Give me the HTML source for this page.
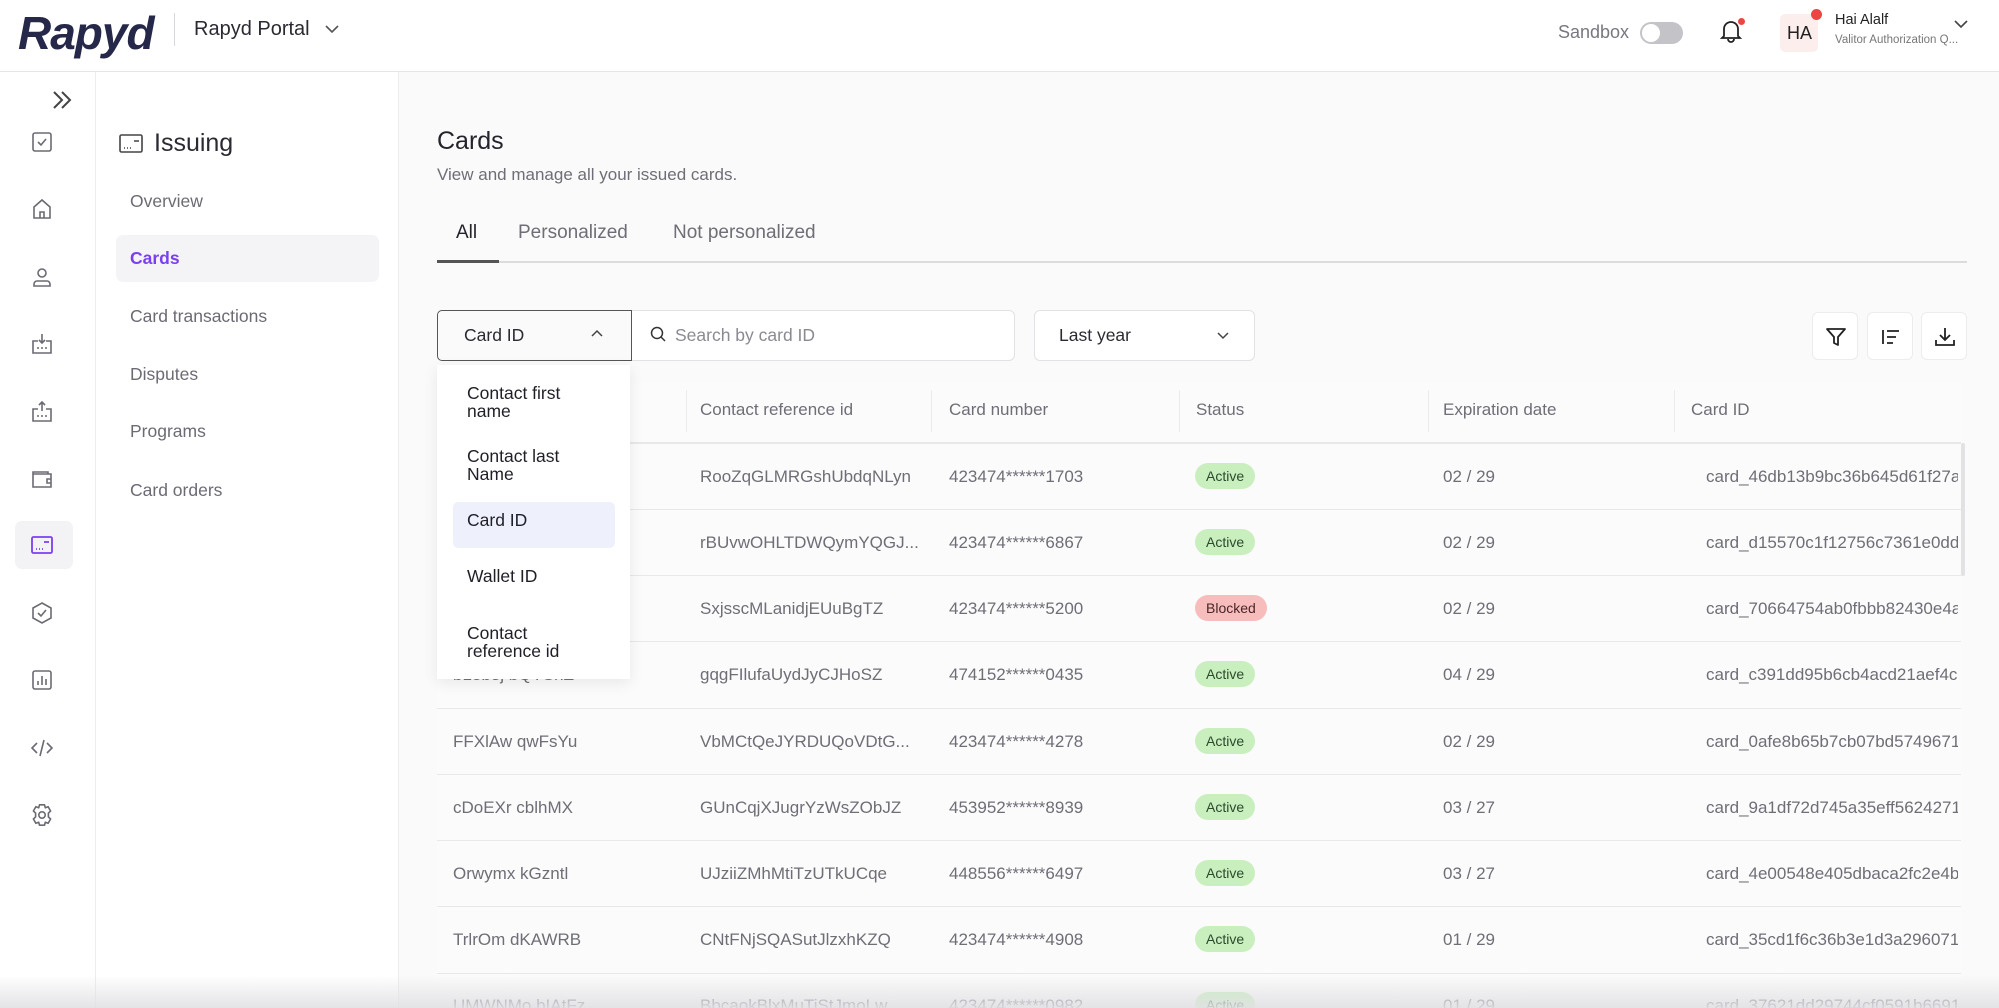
<!DOCTYPE html>
<html><head><meta charset="utf-8"><style>
*{box-sizing:border-box;margin:0;padding:0}
body{width:1999px;height:1008px;overflow:hidden;background:#fafafa;font-family:"Liberation Sans",sans-serif;position:relative;color:#2b2b36}
.abs{position:absolute}
.hdr{left:0;top:0;width:1999px;height:72px;background:#fff;border-bottom:1px solid #e6e6ea}
.rail{left:0;top:72px;width:96px;height:936px;background:#fff;border-right:1px solid #ececef}
.side{left:96px;top:72px;width:303px;height:936px;background:#fff;border-right:1px solid #ececef}
.ic{position:absolute;left:30px;width:24px;height:24px}
.nav{position:absolute;left:34px;font-size:17.5px;color:#6b6b75}
.t{position:absolute;white-space:nowrap}
.row{position:absolute;left:437px;width:1524px;height:1px;background:#e8e8ea}
.cell{position:absolute;font-size:17px;color:#6e6e77;white-space:nowrap}
.pill{position:absolute;height:26px;border-radius:13px;font-size:14px;line-height:26px;padding:0 11px;color:#2c4a2c;background:#c9efbf}
.btn{position:absolute;top:312px;width:46px;height:48px;background:#fff;border:1px solid #ececef;border-radius:6px}
.dd{position:absolute;left:467px;font-size:17.5px;color:#1f1f28;line-height:18px}
</style></head><body>
<div class="abs hdr"></div>
<div class="t" style="left:18px;top:6px;font-size:46px;font-weight:bold;font-style:italic;color:#262849;letter-spacing:-1px">Rapyd</div>
<div class="abs" style="left:174px;top:13px;width:1px;height:33px;background:#d8d8dc"></div>
<div class="t" style="left:194px;top:18px;font-size:20px;color:#2a2a33">Rapyd Portal</div>
<svg class="abs" style="left:324px;top:23px" width="16" height="12" viewBox="0 0 16 12"><path d="M2 3l6 6 6-6" fill="none" stroke="#555" stroke-width="1.6"/></svg>
<div class="t" style="left:1558px;top:22px;font-size:18px;color:#777780">Sandbox</div>
<div class="abs" style="left:1640px;top:22px;width:43px;height:22px;border-radius:11px;background:#c4c4c8"></div>
<div class="abs" style="left:1642px;top:24px;width:18px;height:18px;border-radius:50%;background:#fff"></div>
<svg class="abs" style="left:1719px;top:18px" width="24" height="26" viewBox="0 0 24 26"><path d="M5 18V11a7 7 0 0114 0v7l2 2H3z M9 21a3 3 0 006 0" fill="none" stroke="#222" stroke-width="1.8"/></svg>
<div class="abs" style="left:1738px;top:18px;width:7px;height:7px;border-radius:50%;background:#f04444"></div>
<div class="abs" style="left:1780px;top:14px;width:38px;height:38px;border-radius:5px;background:#fdeeee"></div>
<div class="t" style="left:1787px;top:23px;font-size:18px;color:#222">HA</div>
<div class="abs" style="left:1811px;top:9px;width:11px;height:11px;border-radius:50%;background:#f04444"></div>
<div class="t" style="left:1835px;top:12px;font-size:14.5px;color:#222">Hai Alalf</div>
<div class="t" style="left:1835px;top:34px;font-size:11.5px;color:#777">Valitor Authorization Q...</div>
<svg class="abs" style="left:1953px;top:18px" width="16" height="12" viewBox="0 0 16 12"><path d="M2 3l6 6 6-6" fill="none" stroke="#444" stroke-width="1.6"/></svg>

<div class="abs rail">
<svg class="ic" style="left:50px;top:16px" width="18" height="18" viewBox="0 0 18 18"><path d="M3 3l6 6-6 6M9 3l6 6-6 6" fill="none" stroke="#444" stroke-width="1.5"/></svg>
<svg class="ic" style="top:58px" viewBox="0 0 24 24"><rect x="3" y="3" width="18" height="18" rx="2" fill="none" stroke="#6a6a72" stroke-width="1.6"/><path d="M8 12l3 3 5-6" fill="none" stroke="#6a6a72" stroke-width="1.6"/></svg>
<svg class="ic" style="top:125px" viewBox="0 0 24 24"><path d="M4 21V10l8-7 8 7v11zM10 21v-6h4v6" fill="none" stroke="#6a6a72" stroke-width="1.6"/></svg>
<svg class="ic" style="top:193px" viewBox="0 0 24 24"><circle cx="12" cy="8" r="4" fill="none" stroke="#6a6a72" stroke-width="1.6"/><path d="M4 21v-2a3 3 0 013-3h10a3 3 0 013 3v2z" fill="none" stroke="#6a6a72" stroke-width="1.6"/></svg>
<svg class="ic" style="top:260px" viewBox="0 0 24 24"><path d="M8 9H3v12h18V9h-5M12 2v9M9 8l3 3 3-3M7 16h2M11 16h2M15 16h2" fill="none" stroke="#6a6a72" stroke-width="1.6"/></svg>
<svg class="ic" style="top:328px" viewBox="0 0 24 24"><path d="M8 9H3v12h18V9h-5M12 11V2M9 5l3-3 3 3M7 16h2M11 16h2M15 16h2" fill="none" stroke="#6a6a72" stroke-width="1.6"/></svg>
<svg class="ic" style="top:395px" viewBox="0 0 24 24"><path d="M3 7V5h15v2M3 7h18v13H3zM21 12h-4v4h4" fill="none" stroke="#6a6a72" stroke-width="1.6"/></svg>
<div class="abs" style="left:15px;top:449px;width:58px;height:48px;border-radius:7px;background:#f3f3f5"></div>
<svg class="ic" style="top:461px" viewBox="0 0 24 24"><rect x="2" y="4" width="20" height="16" rx="1.5" fill="none" stroke="#7b3ff2" stroke-width="1.8"/><path d="M14 9h5M6 16h1M9 16h1M12 16h1" stroke="#7b3ff2" stroke-width="1.8"/></svg>
<svg class="ic" style="top:529px" viewBox="0 0 24 24"><path d="M12 2l9 5v10l-9 5-9-5V7z M8 12l3 3 5-6" fill="none" stroke="#6a6a72" stroke-width="1.6"/></svg>
<svg class="ic" style="top:596px" viewBox="0 0 24 24"><rect x="3" y="3" width="18" height="18" rx="2" fill="none" stroke="#6a6a72" stroke-width="1.6"/><path d="M8 17v-4M12 17V8M16 17v-6" stroke="#6a6a72" stroke-width="1.6"/></svg>
<svg class="ic" style="top:664px" viewBox="0 0 24 24"><path d="M7 7l-5 5 5 5M17 7l5 5-5 5M14 4l-4 16" fill="none" stroke="#6a6a72" stroke-width="1.6"/></svg>
<svg class="ic" style="top:731px" viewBox="0 0 24 24"><circle cx="12" cy="12" r="3.2" fill="none" stroke="#6a6a72" stroke-width="1.6"/><path d="M9.5 1.8h5l.8 3 2.8-1.1 2.5 4.3-2.2 2.1v3.8l2.2 2.1-2.5 4.3-2.8-1.1-.8 3h-5l-.8-3-2.8 1.1-2.5-4.3 2.2-2.1v-3.8L3.4 8l2.5-4.3 2.8 1.1z" fill="none" stroke="#6a6a72" stroke-width="1.6" stroke-linejoin="round"/></svg>
</div>

<div class="abs side">
<svg class="abs" style="left:23px;top:61px" width="24" height="22" viewBox="0 0 24 22"><rect x="1" y="2" width="22" height="17" rx="1.5" fill="none" stroke="#444" stroke-width="1.6"/><path d="M15 8h5M5 15h1M8 15h1M11 15h1" stroke="#444" stroke-width="1.6"/></svg>
<div class="t" style="left:58px;top:57px;font-size:25px;color:#2a2a33">Issuing</div>
<div class="nav" style="top:119px">Overview</div>
<div class="abs" style="left:20px;top:163px;width:263px;height:47px;border-radius:7px;background:#f4f4f6"></div>
<div class="nav" style="top:176px;color:#7b3ff2;font-weight:bold">Cards</div>
<div class="nav" style="top:234px">Card transactions</div>
<div class="nav" style="top:292px">Disputes</div>
<div class="nav" style="top:349px">Programs</div>
<div class="nav" style="top:408px">Card orders</div>
</div>

<div class="t" style="left:437px;top:127px;font-size:25px;color:#24242c">Cards</div>
<div class="t" style="left:437px;top:165px;font-size:17px;color:#6e6e77">View and manage all your issued cards.</div>
<div class="t" style="left:456px;top:222px;font-size:19px;color:#24242c">All</div>
<div class="t" style="left:518px;top:222px;font-size:19px;color:#6e6e77">Personalized</div>
<div class="t" style="left:673px;top:222px;font-size:19px;color:#6e6e77">Not personalized</div>
<div class="abs" style="left:437px;top:261px;width:1530px;height:2px;background:#dcdcdf"></div>
<div class="abs" style="left:437px;top:260px;width:62px;height:3px;background:#555"></div>

<div class="abs" style="left:631px;top:310px;width:384px;height:51px;background:#fff;border:1px solid #e2e2e6;border-radius:0 6px 6px 0"></div>
<div class="abs" style="left:437px;top:310px;width:195px;height:51px;background:#fafafa;border:1.5px solid #555;border-radius:5px 0 0 5px"></div>
<div class="t" style="left:464px;top:325px;font-size:17.5px;color:#2a2a33">Card ID</div>
<svg class="abs" style="left:590px;top:329px" width="14" height="10" viewBox="0 0 14 10"><path d="M2 7l5-5 5 5" fill="none" stroke="#444" stroke-width="1.5"/></svg>
<svg class="abs" style="left:650px;top:326px" width="17" height="17" viewBox="0 0 17 17"><circle cx="7" cy="7" r="5.5" fill="none" stroke="#333" stroke-width="1.5"/><path d="M11 11l4 4" stroke="#333" stroke-width="1.5"/></svg>
<div class="t" style="left:675px;top:325px;font-size:17.5px;color:#8a8a92">Search by card ID</div>
<div class="abs" style="left:1034px;top:310px;width:221px;height:51px;background:#fff;border:1px solid #e2e2e6;border-radius:6px"></div>
<div class="t" style="left:1059px;top:325px;font-size:17.5px;color:#2a2a33">Last year</div>
<svg class="abs" style="left:1216px;top:330px" width="14" height="10" viewBox="0 0 14 10"><path d="M2 3l5 5 5-5" fill="none" stroke="#444" stroke-width="1.5"/></svg>
<div class="btn" style="left:1812px"><svg style="position:absolute;left:11px;top:12px" width="24" height="24" viewBox="0 0 24 24"><path d="M3 4h18l-7 8v8l-4-2v-6z" fill="none" stroke="#222" stroke-width="1.8" stroke-linejoin="round"/></svg></div>
<div class="btn" style="left:1867px"><svg style="position:absolute;left:12px;top:13px" width="22" height="22" viewBox="0 0 22 22"><path d="M3 4v14M7 5h12M7 11h9M7 17h6" stroke="#222" stroke-width="1.8"/></svg></div>
<div class="btn" style="left:1921px"><svg style="position:absolute;left:11px;top:12px" width="24" height="24" viewBox="0 0 24 24"><path d="M12 3v12M7 10l5 5 5-5M3 15v5h18v-5" fill="none" stroke="#222" stroke-width="1.8"/></svg></div>

<div class="abs" style="left:437px;top:383px;width:1524px;height:600px;background:#fbfbfb"></div>
<div class="abs" style="left:686px;top:390px;width:1px;height:42px;background:#ececee"></div>
<div class="abs" style="left:931px;top:390px;width:1px;height:42px;background:#ececee"></div>
<div class="abs" style="left:1179px;top:390px;width:1px;height:42px;background:#ececee"></div>
<div class="abs" style="left:1428px;top:390px;width:1px;height:42px;background:#ececee"></div>
<div class="abs" style="left:1674px;top:390px;width:1px;height:42px;background:#ececee"></div>
<div class="cell" style="left:700px;top:400px">Contact reference id</div>
<div class="cell" style="left:949px;top:400px">Card number</div>
<div class="cell" style="left:1196px;top:400px">Status</div>
<div class="cell" style="left:1443px;top:400px">Expiration date</div>
<div class="cell" style="left:1691px;top:400px">Card ID</div>
<div class="row" style="top:442px;height:2px"></div>
<div class="row" style="top:509px"></div><div class="row" style="top:575px"></div><div class="row" style="top:641px"></div><div class="row" style="top:708px"></div><div class="row" style="top:774px"></div><div class="row" style="top:840px"></div><div class="row" style="top:906px"></div><div class="row" style="top:973px"></div>
<div class="abs" style="left:1961px;top:443px;width:4px;height:133px;border-radius:2px;background:#e2e2e4"></div>

<div style="position:absolute;left:0;top:0;width:1958px;height:1008px;overflow:hidden">
<div class="cell" style="left:453px;top:467px">fkQhbc PLxPsA</div>
<div class="cell" style="left:700px;top:467px">RooZqGLMRGshUbdqNLyn</div><div class="cell" style="left:949px;top:467px">423474******1703</div><div class="pill" style="left:1195px;top:463px">Active</div><div class="cell" style="left:1443px;top:467px">02 / 29</div><div class="cell" style="left:1706px;top:467px">card_46db13b9bc36b645d61f27a1</div>
<div class="cell" style="left:453px;top:533px">wAvKcn lPzdSb</div>
<div class="cell" style="left:700px;top:533px">rBUvwOHLTDWQymYQGJ...</div><div class="cell" style="left:949px;top:533px">423474******6867</div><div class="pill" style="left:1195px;top:529px">Active</div><div class="cell" style="left:1443px;top:533px">02 / 29</div><div class="cell" style="left:1706px;top:533px">card_d15570c1f12756c7361e0dd2</div>
<div class="cell" style="left:453px;top:599px">QxyEdp HzPsld</div>
<div class="cell" style="left:700px;top:599px">SxjsscMLanidjEUuBgTZ</div><div class="cell" style="left:949px;top:599px">423474******5200</div><div class="pill" style="left:1195px;top:595px;background:#f7bcbc;color:#4a2626">Blocked</div><div class="cell" style="left:1443px;top:599px">02 / 29</div><div class="cell" style="left:1706px;top:599px">card_70664754ab0fbbb82430e4a</div>
<div class="cell" style="left:453px;top:665px">b18b3j bQYSnZ</div>
<div class="cell" style="left:700px;top:665px">gqgFIlufaUydJyCJHoSZ</div><div class="cell" style="left:949px;top:665px">474152******0435</div><div class="pill" style="left:1195px;top:661px">Active</div><div class="cell" style="left:1443px;top:665px">04 / 29</div><div class="cell" style="left:1706px;top:665px">card_c391dd95b6cb4acd21aef4c3</div>
<div class="cell" style="left:453px;top:732px">FFXlAw qwFsYu</div>
<div class="cell" style="left:700px;top:732px">VbMCtQeJYRDUQoVDtG...</div><div class="cell" style="left:949px;top:732px">423474******4278</div><div class="pill" style="left:1195px;top:728px">Active</div><div class="cell" style="left:1443px;top:732px">02 / 29</div><div class="cell" style="left:1706px;top:732px">card_0afe8b65b7cb07bd5749671</div>
<div class="cell" style="left:453px;top:798px">cDoEXr cblhMX</div>
<div class="cell" style="left:700px;top:798px">GUnCqjXJugrYzWsZObJZ</div><div class="cell" style="left:949px;top:798px">453952******8939</div><div class="pill" style="left:1195px;top:794px">Active</div><div class="cell" style="left:1443px;top:798px">03 / 27</div><div class="cell" style="left:1706px;top:798px">card_9a1df72d745a35eff5624271</div>
<div class="cell" style="left:453px;top:864px">Orwymx kGzntl</div>
<div class="cell" style="left:700px;top:864px">UJziiZMhMtiTzUTkUCqe</div><div class="cell" style="left:949px;top:864px">448556******6497</div><div class="pill" style="left:1195px;top:860px">Active</div><div class="cell" style="left:1443px;top:864px">03 / 27</div><div class="cell" style="left:1706px;top:864px">card_4e00548e405dbaca2fc2e4b</div>
<div class="cell" style="left:453px;top:930px">TrlrOm dKAWRB</div>
<div class="cell" style="left:700px;top:930px">CNtFNjSQASutJlzxhKZQ</div><div class="cell" style="left:949px;top:930px">423474******4908</div><div class="pill" style="left:1195px;top:926px">Active</div><div class="cell" style="left:1443px;top:930px">01 / 29</div><div class="cell" style="left:1706px;top:930px">card_35cd1f6c36b3e1d3a296071</div>
<div class="cell" style="left:453px;top:996px">UMWNMo bIAtFz</div>
<div class="cell" style="left:700px;top:996px">BbcaokBlxMuTiStJmoLw</div><div class="cell" style="left:949px;top:996px">423474******0982</div><div class="pill" style="left:1195px;top:992px">Active</div><div class="cell" style="left:1443px;top:996px">01 / 29</div><div class="cell" style="left:1706px;top:996px">card_37621dd29744cf0591b6691</div>
</div>
<div class="abs" style="left:0;top:975px;width:1999px;height:33px;background:linear-gradient(rgba(240,240,242,0),rgba(225,225,228,0.9))"></div>

<div class="abs" style="left:437px;top:365px;width:193px;height:314px;background:#fff;box-shadow:0 4px 14px rgba(0,0,0,0.08)"></div>
<div class="dd" style="top:384px">Contact first<br>name</div>
<div class="dd" style="top:447px">Contact last<br>Name</div>
<div class="abs" style="left:453px;top:502px;width:162px;height:46px;border-radius:5px;background:#eef1fb"></div>
<div class="dd" style="top:511px">Card ID</div>
<div class="dd" style="top:567px">Wallet ID</div>
<div class="dd" style="top:624px">Contact<br>reference id</div>
</body></html>
